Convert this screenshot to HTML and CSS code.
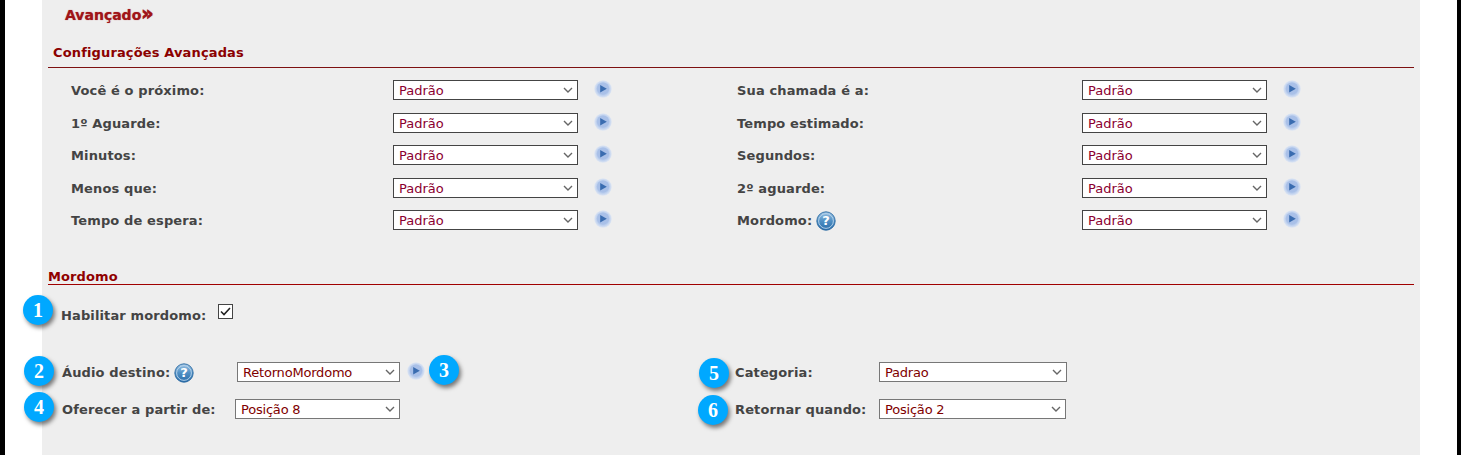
FILE: index.html
```html
<!DOCTYPE html>
<html lang="pt-BR">
<head>
<meta charset="utf-8">
<title>Avançado</title>
<link rel="stylesheet" href="styles.css">
</head>
<body>
<svg class="defs" width="0" height="0" aria-hidden="true">
  <defs>
    <radialGradient id="playHalo" cx="50%" cy="50%" r="50%">
      <stop offset="0" stop-color="#b4c9ec"/>
      <stop offset="0.72" stop-color="#bccfee"/>
      <stop offset="1" stop-color="#e0e7f3"/>
    </radialGradient>
    <linearGradient id="helpFill" x1="0" y1="0" x2="0" y2="1">
      <stop offset="0" stop-color="#9cc3e4"/>
      <stop offset="0.5" stop-color="#4f8fc4"/>
      <stop offset="1" stop-color="#2a6ca8"/>
    </linearGradient>
    <symbol id="play" viewBox="0 0 18 18">
      <circle cx="9" cy="9" r="8.8" fill="url(#playHalo)"/>
      <circle cx="9" cy="8.6" r="6.2" fill="#a9c0e8"/>
      <path d="M6.2 5 L12.8 8.8 L6.2 12.4 Z" fill="#3a6cb0"/>
    </symbol>
    <symbol id="help" viewBox="0 0 20 20">
      <circle cx="10" cy="10" r="9.2" fill="url(#helpFill)" stroke="#2d6ba3" stroke-width="0.9"/>
      <circle cx="10" cy="10" r="7.4" fill="none" stroke="#bcd6ec" stroke-width="0.9"/>
      <text x="10" y="14.4" text-anchor="middle" class="help-mark">?</text>
    </symbol>
  </defs>
</svg>
<div class="frame">
  <main class="panel">
    <div class="crumb">Avançado<span class="crumb-arrows">»</span></div>

    <h2 class="title title-config">Configurações Avançadas</h2>
    <div class="config-grid">
      <label class="lbl">Você é o próximo:</label>
      <select class="sel sel-dark"><option>Padrão</option></select>
      <svg class="play"><use href="#play"/></svg>
      <label class="lbl">Sua chamada é a:</label>
      <select class="sel sel-dark"><option>Padrão</option></select>
      <svg class="play"><use href="#play"/></svg>

      <label class="lbl">1º Aguarde:</label>
      <select class="sel sel-dark"><option>Padrão</option></select>
      <svg class="play"><use href="#play"/></svg>
      <label class="lbl">Tempo estimado:</label>
      <select class="sel sel-dark"><option>Padrão</option></select>
      <svg class="play"><use href="#play"/></svg>

      <label class="lbl">Minutos:</label>
      <select class="sel sel-dark"><option>Padrão</option></select>
      <svg class="play"><use href="#play"/></svg>
      <label class="lbl">Segundos:</label>
      <select class="sel sel-dark"><option>Padrão</option></select>
      <svg class="play"><use href="#play"/></svg>

      <label class="lbl">Menos que:</label>
      <select class="sel sel-dark"><option>Padrão</option></select>
      <svg class="play"><use href="#play"/></svg>
      <label class="lbl">2º aguarde:</label>
      <select class="sel sel-dark"><option>Padrão</option></select>
      <svg class="play"><use href="#play"/></svg>

      <label class="lbl">Tempo de espera:</label>
      <select class="sel sel-dark"><option>Padrão</option></select>
      <svg class="play"><use href="#play"/></svg>
      <label class="lbl lbl-help">Mordomo: <svg class="help"><use href="#help"/></svg></label>
      <select class="sel sel-dark"><option>Padrão</option></select>
      <svg class="play"><use href="#play"/></svg>
    </div>

    <h2 class="title title-butler">Mordomo</h2>

    <div class="enable-row">
      <span class="badge badge-1">1</span>
      <label class="lbl">Habilitar mordomo:</label>
      <input class="check" type="checkbox" checked>
    </div>

    <div class="butler-grid">
      <div class="field field-audio">
        <span class="badge badge-2">2</span>
        <label class="lbl lbl-help">Áudio destino: <svg class="help"><use href="#help"/></svg></label>
        <select class="sel sel-gray sel-audio"><option>RetornoMordomo</option></select>
        <svg class="play play-audio"><use href="#play"/></svg>
        <span class="badge badge-3">3</span>
      </div>
      <div class="field field-cat">
        <span class="badge badge-5">5</span>
        <label class="lbl">Categoria:</label>
        <select class="sel sel-gray sel-cat"><option>Padrao</option></select>
      </div>
      <div class="field field-offer">
        <span class="badge badge-4">4</span>
        <label class="lbl">Oferecer a partir de:</label>
        <select class="sel sel-gray sel-offer"><option>Posição 8</option></select>
      </div>
      <div class="field field-return">
        <span class="badge badge-6">6</span>
        <label class="lbl">Retornar quando:</label>
        <select class="sel sel-gray sel-return"><option>Posição 2</option></select>
      </div>
    </div>
  </main>
</div>
</body>
</html>
```

FILE: styles.css
```css
* { box-sizing: border-box; }
html, body { margin: 0; padding: 0; background: #fff; }
body { font-family: "DejaVu Sans", Verdana, sans-serif; font-size: 13px; overflow: hidden; }
.defs { position: absolute; }
.help-mark { font: bold 13px "DejaVu Sans", sans-serif; fill: #fff; }

.frame {
  height: 455px;
  border-left: 5px solid #000;
  border-right: 4px solid #000;
  padding: 0 37px;
  overflow: hidden;
}
.panel {
  height: 455px;
  background: #eee;
  padding: 6px 6px 0;
}
.crumb {
  margin-left: 17px;
  height: 16px;
  line-height: 16px;
  font-weight: bold;
  font-size: 14px;
  color: #a01418;
  text-shadow: 0 0 1px rgba(160, 20, 24, 0.7);
}
.crumb-arrows { font-size: 19px; line-height: 14px; -webkit-text-stroke: 0.6px #a01418; }

.title {
  margin: 0;
  font-size: 13px;
  font-weight: bold;
  line-height: 16px;
  color: #8b0000;
  border-bottom: 1px solid;
}
.title-config {
  margin-top: 23px;
  width: 1366px;
  height: 23px;
  padding: 0 0 0 5px;
  letter-spacing: 0.14px;
  border-bottom-color: #7d1010;
}
.config-grid {
  margin-top: 12px;
  display: grid;
  grid-template-columns: 322px 185px 159px 345px 185px 1fr;
  grid-template-rows: 33px 32px 33px 32px 33px;
  height: 163px;
  padding-left: 23px;
  align-items: start;
}
.lbl {
  font-weight: bold;
  color: #444;
  font-size: 13px;
  line-height: 20px;
  letter-spacing: 0.13px;
  white-space: nowrap;
}
.config-grid .lbl { margin-top: 1px; }
.lbl-help { display: flex; align-items: center; gap: 4px; }
.sel {
  appearance: none;
  -webkit-appearance: none;
  height: 20px;
  font-family: "DejaVu Sans", Verdana, sans-serif;
  font-size: 13px;
  color: #800000;
  border-radius: 0;
  padding: 0 0 0 5px;
  margin: 0;
  background: #fff url("data:image/svg+xml,%3Csvg xmlns='http://www.w3.org/2000/svg' width='10' height='6'%3E%3Cpath d='M1 1l4 4 4-4' fill='none' stroke='%23666' stroke-width='1.4'/%3E%3C/svg%3E") no-repeat right 4px center;
}
.sel-dark { width: 185px; border: 1px solid #444; color: #8b0030; }
.sel-gray { border: 1px solid #777; letter-spacing: -0.2px; }
.play { width: 18px; height: 18px; margin-left: 16px; display: block; }
.help { width: 20px; height: 20px; display: block; }

.title-butler {
  margin-top: 26px;
  width: 1366px;
  height: 16px;
  letter-spacing: 0.1px;
  border-bottom-color: #a00000;
  color: #900000;
}

.enable-row {
  position: relative;
  display: flex;
  align-items: flex-start;
  margin-top: 19px;
  height: 58px;
  padding-left: 13px;
}
.enable-row .lbl { margin-top: 2px; }
.check {
  appearance: none;
  -webkit-appearance: none;
  margin: 0 0 0 12px;
  width: 15px;
  height: 15px;
  border: 1px solid #444;
  background: #fff url("data:image/svg+xml,%3Csvg xmlns='http://www.w3.org/2000/svg' width='13' height='13'%3E%3Cpath d='M2 6.5l3 3 6-6.5' fill='none' stroke='%23222' stroke-width='1.6'/%3E%3C/svg%3E") no-repeat center;
}

.butler-grid {
  display: grid;
  grid-template-columns: 687px 1fr;
  grid-auto-rows: 37px;
}
.field { position: relative; display: flex; align-items: flex-start; }
.field .lbl { margin-top: 1px; }
.field-audio, .field-offer { padding-left: 14px; }
.sel-audio { width: 163px; }
.sel-offer { width: 165px; }
.sel-cat { width: 188px; }
.sel-return { width: 187px; }
.field-audio .lbl { width: 175px; }
.field-offer .lbl { width: 173px; }
.field-cat .lbl, .field-return .lbl { width: 144px; }
.play-audio { margin-left: 7px; }

.badge {
  position: absolute;
  width: 30px;
  height: 30px;
  border-radius: 50%;
  background: #00a8ff;
  color: #fff;
  font: bold 20px/30px "Liberation Serif", serif;
  text-align: center;
  box-shadow: 2px 3px 4px rgba(0, 0, 0, 0.5);
}
.badge-1 { left: -25px; top: -9px; }
.badge-2 { left: -24px; top: -6px; }
.badge-3 { left: 381px; top: -7px; }
.badge-4 { left: -24px; top: -7px; }
.badge-5 { left: -36px; top: -4px; }
.badge-6 { left: -37px; top: -4px; }
```
